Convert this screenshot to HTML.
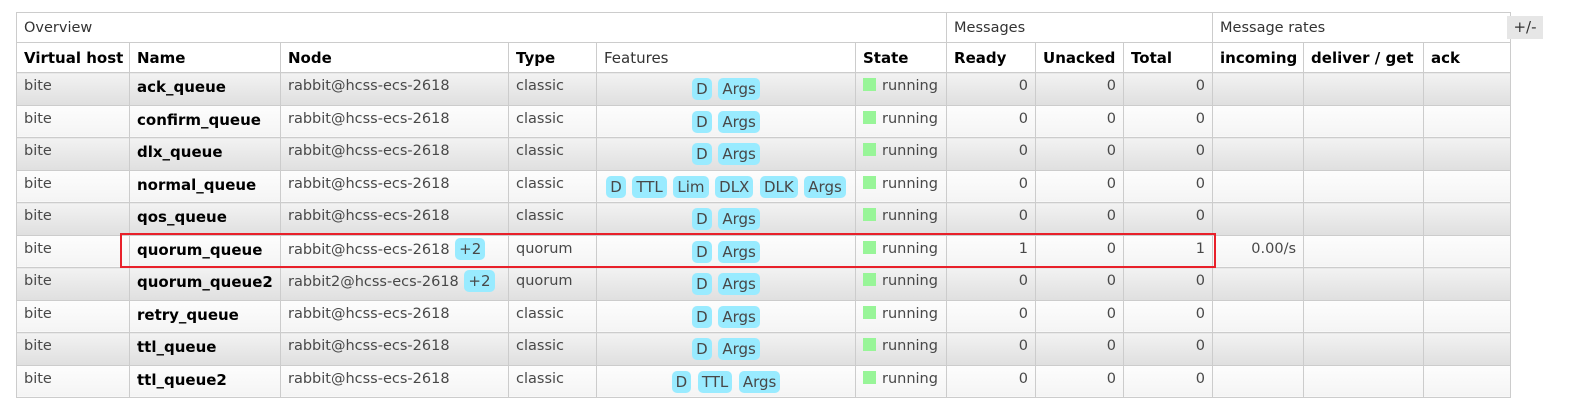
<!DOCTYPE html>
<html><head><style>
body{margin:0;background:#fff;font-family:"DejaVu Sans","Liberation Sans",sans-serif;font-size:14.5px;color:#484848;}
table{position:absolute;left:16px;top:12px;border-collapse:collapse;table-layout:fixed;width:1494px;}
td,th{border:1px solid #ccc;padding:0 7px;text-align:left;vertical-align:top;white-space:nowrap;overflow:visible;}
th{font-weight:bold;color:#000;height:29px;vertical-align:middle;font-size:15px}
tr.h1 th{font-weight:normal;color:#333;font-size:14.5px}
tr.d{height:32.5px}
tr.d td{padding-top:5px;}
tr.o td{background:linear-gradient(#f2f2f2,#dfdfdf);}
tr.e td{background:linear-gradient(#fdfdfd,#f4f4f4);}
td.n{font-weight:bold;color:#000;font-size:15px}
td.r{text-align:right}
td.f{text-align:center;padding:4px 0 0 0}
.b{display:inline-block;background:#99ebff;border-radius:5px;padding:1px 4px;line-height:20px;margin:0 1px;color:#484848;font-size:15px}
td .b.p{margin-top:-3px}
.s{display:inline-block;width:13px;height:13px;background:#98f598;margin-right:6px;vertical-align:-1px}
.pm{position:absolute;left:1507px;top:16px;width:36px;height:23px;background:#e6e6e6;color:#333;text-align:center;line-height:23px;font-size:15px}
.red{position:absolute;left:120px;top:233px;width:1092px;height:31px;border:2px solid #e8202a}
</style></head><body>
<table>
<colgroup><col style="width:113px"><col style="width:151px"><col style="width:228px"><col style="width:88px"><col style="width:259px"><col style="width:91px"><col style="width:89px"><col style="width:88px"><col style="width:89px"><col style="width:91px"><col style="width:120px"><col style="width:87px"></colgroup>
<tr class="h1"><th colspan="6">Overview</th><th colspan="3">Messages</th><th colspan="3">Message rates</th></tr>
<tr><th>Virtual host</th><th>Name</th><th>Node</th><th>Type</th><th style="font-weight:normal;color:#333">Features</th><th>State</th><th>Ready</th><th>Unacked</th><th>Total</th><th>incoming</th><th>deliver / get</th><th>ack</th></tr>
<tr class="d o"><td>bite</td><td class="n">ack_queue</td><td>rabbit@hcss-ecs-2618</td><td>classic</td><td class="f"><span class="b">D</span> <span class="b">Args</span></td><td><span class="s"></span>running</td><td class="r">0</td><td class="r">0</td><td class="r">0</td><td></td><td></td><td></td></tr>
<tr class="d e"><td>bite</td><td class="n">confirm_queue</td><td>rabbit@hcss-ecs-2618</td><td>classic</td><td class="f"><span class="b">D</span> <span class="b">Args</span></td><td><span class="s"></span>running</td><td class="r">0</td><td class="r">0</td><td class="r">0</td><td></td><td></td><td></td></tr>
<tr class="d o"><td>bite</td><td class="n">dlx_queue</td><td>rabbit@hcss-ecs-2618</td><td>classic</td><td class="f"><span class="b">D</span> <span class="b">Args</span></td><td><span class="s"></span>running</td><td class="r">0</td><td class="r">0</td><td class="r">0</td><td></td><td></td><td></td></tr>
<tr class="d e"><td>bite</td><td class="n">normal_queue</td><td>rabbit@hcss-ecs-2618</td><td>classic</td><td class="f"><span class="b">D</span> <span class="b">TTL</span> <span class="b">Lim</span> <span class="b">DLX</span> <span class="b">DLK</span> <span class="b">Args</span></td><td><span class="s"></span>running</td><td class="r">0</td><td class="r">0</td><td class="r">0</td><td></td><td></td><td></td></tr>
<tr class="d o"><td>bite</td><td class="n">qos_queue</td><td>rabbit@hcss-ecs-2618</td><td>classic</td><td class="f"><span class="b">D</span> <span class="b">Args</span></td><td><span class="s"></span>running</td><td class="r">0</td><td class="r">0</td><td class="r">0</td><td></td><td></td><td></td></tr>
<tr class="d e"><td>bite</td><td class="n">quorum_queue</td><td>rabbit@hcss-ecs-2618 <span class="b p">+2</span></td><td>quorum</td><td class="f"><span class="b">D</span> <span class="b">Args</span></td><td><span class="s"></span>running</td><td class="r">1</td><td class="r">0</td><td class="r">1</td><td class="r">0.00/s</td><td></td><td></td></tr>
<tr class="d o"><td>bite</td><td class="n">quorum_queue2</td><td>rabbit2@hcss-ecs-2618 <span class="b p">+2</span></td><td>quorum</td><td class="f"><span class="b">D</span> <span class="b">Args</span></td><td><span class="s"></span>running</td><td class="r">0</td><td class="r">0</td><td class="r">0</td><td></td><td></td><td></td></tr>
<tr class="d e"><td>bite</td><td class="n">retry_queue</td><td>rabbit@hcss-ecs-2618</td><td>classic</td><td class="f"><span class="b">D</span> <span class="b">Args</span></td><td><span class="s"></span>running</td><td class="r">0</td><td class="r">0</td><td class="r">0</td><td></td><td></td><td></td></tr>
<tr class="d o"><td>bite</td><td class="n">ttl_queue</td><td>rabbit@hcss-ecs-2618</td><td>classic</td><td class="f"><span class="b">D</span> <span class="b">Args</span></td><td><span class="s"></span>running</td><td class="r">0</td><td class="r">0</td><td class="r">0</td><td></td><td></td><td></td></tr>
<tr class="d e"><td>bite</td><td class="n">ttl_queue2</td><td>rabbit@hcss-ecs-2618</td><td>classic</td><td class="f"><span class="b">D</span> <span class="b">TTL</span> <span class="b">Args</span></td><td><span class="s"></span>running</td><td class="r">0</td><td class="r">0</td><td class="r">0</td><td></td><td></td><td></td></tr>
</table>
<div class="pm">+/-</div>
<div class="red"></div>
</body></html>
